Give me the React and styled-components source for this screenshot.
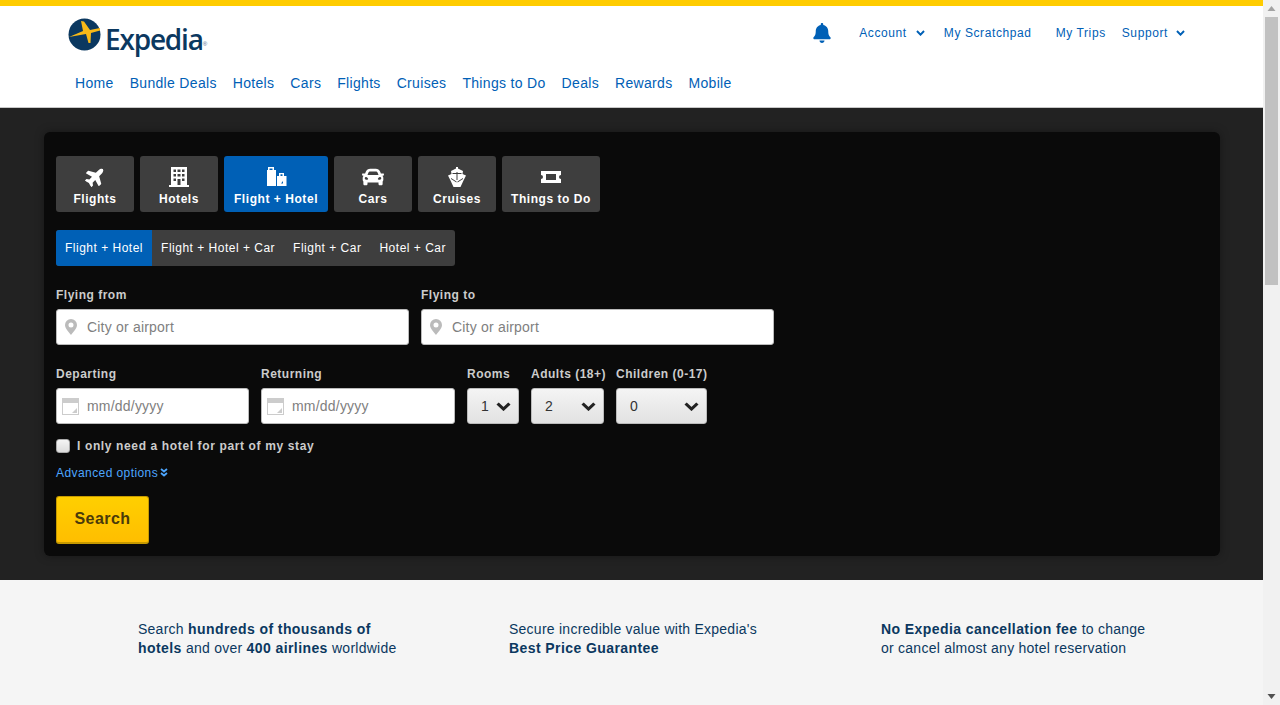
import React from "react";
import styled, { createGlobalStyle } from "styled-components";
import { FaBell, FaPlane, FaCar } from "react-icons/fa";

const Global = createGlobalStyle`
  html, body { margin: 0; padding: 0; height: 100%; overflow: hidden; }
  body { font-family: "Liberation Sans", Arial, sans-serif; }
  * { box-sizing: border-box; }
`;

const Shell = styled.div`
  display: flex;
  height: 100vh;
`;
const Page = styled.main`
  flex: 1;
  min-width: 0;
  overflow: hidden;
  background: #f5f5f5;
`;
const ScrollBar = styled.div`
  display: flex;
  flex-direction: column;
  width: 17px;
  flex: none;
  background: #f1f1f1;
`;
const ScrollArrow = styled.svg`
  width: 17px;
  height: 17px;
  flex: none;
  fill: ${(p) => p.$fill};
`;
const ScrollTrack = styled.div`
  flex: 1;
  padding: 0 2px;
`;
const ScrollThumb = styled.div`
  height: 268px;
  background: #c1c1c1;
`;

const Header = styled.header`
  height: 108px;
  background: #fff;
  border-top: 6px solid #ffcc00;
  border-bottom: 1px solid #c8c8c8;
  padding: 12px 78px 0 68px;
`;
const TopRow = styled.div`
  display: flex;
  justify-content: space-between;
  align-items: flex-start;
  height: 52px;
`;
const Logo = styled.a`
  display: flex;
  align-items: flex-start;
  color: #0b3860;
`;
const LogoMark = styled.svg`
  width: 33px;
  height: 33px;
  flex: none;
`;
const LogoWord = styled.span`
  font-family: "Open Sans", sans-serif;
  font-weight: 600;
  font-size: 28px;
  line-height: 38px;
  letter-spacing: -1.2px;
  margin: 2px 0 0 4px;
`;
const LogoReg = styled.sup`
  font-size: 6px;
  line-height: 6px;
  letter-spacing: 0;
  align-self: flex-start;
  margin-top: 23px;
  color: #4a6a88;
`;
const Account = styled.nav`
  display: flex;
  align-items: center;
  height: 30px;
`;
const BellIcon = styled(FaBell)`
  width: 18px;
  height: 20px;
  color: #0060b6;
  margin-right: 28px;
`;
const TopLink = styled.a`
  display: flex;
  align-items: center;
  margin-left: ${(p) => p.$gap || 0}px;
  font-size: 12px;
  letter-spacing: 0.6px;
  color: #0060b6;
`;
const ChevronSvg = styled.svg`
  flex: none;
  fill: none;
  stroke: currentColor;
  stroke-width: 3;
  width: ${(p) => p.$w}px;
  height: ${(p) => p.$h}px;
  margin-left: ${(p) => p.$ml || 0}px;
`;
const Chevron = ({ w, h, ml }) => (
  <ChevronSvg viewBox="0 0 14 9" $w={w} $h={h} $ml={ml} preserveAspectRatio="none">
    <path d="M1.5 1.5 L7 7 L12.5 1.5" />
  </ChevronSvg>
);
const MainNav = styled.nav`
  display: flex;
  gap: 16px;
  padding-left: 7px;
`;
const NavLink = styled.a`
  font-size: 14px;
  line-height: 26px;
  letter-spacing: 0.32px;
  color: #0060b6;
`;

const Band = styled.section`
  background: #222;
  padding: 24px 43px 24px 44px;
`;
const Card = styled.div`
  background: #0a0a0a;
  border-radius: 6px;
  box-shadow: 0 0 10px rgba(0, 0, 0, 0.35);
  padding: 24px 12px 12px;
  height: 424px;
`;
const Tabs = styled.div`
  display: flex;
  gap: 6px;
`;
const Tab = styled.a`
  display: flex;
  flex-direction: column;
  align-items: center;
  width: ${(p) => p.$w}px;
  height: 56px;
  padding-top: 10px;
  border-radius: 3px;
  background: ${(p) => (p.$active ? "#0060b6" : "#3e3e3e")};
  color: #fff;
  font-size: 12px;
  font-weight: bold;
  letter-spacing: 0.55px;
`;
const TabIcon = styled.svg`
  width: 22px;
  height: 22px;
  fill: #fff;
  flex: none;
`;
const TabPlane = styled(FaPlane)`
  width: 21px;
  height: 21px;
  transform: rotate(-45deg);
  flex: none;
  margin-bottom: 1px;
`;
const TabCar = styled(FaCar)`
  width: 22px;
  height: 22px;
  flex: none;
`;
const TabLabel = styled.span`
  line-height: 14px;
  margin-top: 4px;
  white-space: nowrap;
`;
const SubTabs = styled.div`
  display: inline-flex;
  margin-top: 18px;
  height: 36px;
  background: #3e3e3e;
  border-radius: 3px;
  overflow: hidden;
  vertical-align: top;
`;
const SubTab = styled.a`
  padding: 0 9px;
  line-height: 37px;
  font-size: 12px;
  letter-spacing: 0.5px;
  color: #fff;
  background: ${(p) => (p.$active ? "#0060b6" : "transparent")};
  white-space: nowrap;
`;
const Row = styled.div`
  display: flex;
  gap: 12px;
  margin-top: ${(p) => p.$top}px;
`;
const Field = styled.label`
  display: block;
  width: ${(p) => p.$w}px;
  flex: none;
`;
const FieldLabel = styled.div`
  font-size: 12px;
  font-weight: bold;
  letter-spacing: 0.5px;
  line-height: 15px;
  color: #ccc;
  white-space: nowrap;
  margin-bottom: 7px;
  padding-top: 1px;
  height: 15px;
`;
const InputBox = styled.div`
  display: flex;
  align-items: center;
  height: 36px;
  background: #fff;
  border: 1px solid #bbb;
  border-radius: 3px;
  padding-left: ${(p) => p.$pad}px;
`;
const PinIcon = styled.svg`
  width: 12px;
  height: 16px;
  fill: #bbb;
  flex: none;
  margin-right: 10px;
`;
const CalIcon = styled.svg`
  width: 17px;
  height: 17px;
  flex: none;
  margin-right: 8px;
`;
const Input = styled.input`
  flex: 1;
  min-width: 0;
  border: 0;
  outline: 0;
  padding: 0;
  background: transparent;
  font-family: inherit;
  font-size: 14px;
  letter-spacing: 0.2px;
  &::placeholder { color: #808080; opacity: 1; }
`;
const Select = styled.div`
  display: flex;
  align-items: center;
  justify-content: space-between;
  height: 36px;
  padding: 0 7px 0 13px;
  background: linear-gradient(#f4f4f4, #e2e2e2);
  border: 1px solid #bbb;
  border-radius: 3px;
  font-size: 14px;
  color: #333;
`;
const SelectChevronWrap = styled.span`
  display: flex;
  color: #222;
`;
const CheckRow = styled.label`
  display: flex;
  align-items: center;
  margin-top: 14px;
  height: 15px;
  font-size: 12px;
  font-weight: bold;
  letter-spacing: 0.63px;
  color: #ccc;
`;
const Check = styled.span`
  width: 14px;
  height: 14px;
  background: linear-gradient(#f4f4f4, #dcdcdc);
  border: 1px solid #aaa;
  border-radius: 3px;
  margin-right: 7px;
`;
const Advanced = styled.a`
  display: flex;
  align-items: center;
  margin-top: 12px;
  height: 15px;
  font-size: 12px;
  letter-spacing: 0.42px;
  color: #4da6ff;
`;
const AdvIcon = styled.svg`
  width: 8px;
  height: 9px;
  margin-left: 2px;
  fill: none;
  stroke: currentColor;
  stroke-width: 1.8;
`;
const SearchButton = styled.button`
  display: block;
  width: 93px;
  height: 48px;
  margin-top: 16px;
  padding: 0 0 1px;
  border: 1px solid #c79a00;
  border-bottom-width: 2px;
  border-radius: 3px;
  background: linear-gradient(#ffcf00, #ffbe00);
  font-family: inherit;
  font-size: 16px;
  font-weight: bold;
  letter-spacing: 0.45px;
  color: #4a3a0a;
`;
const Benefits = styled.section`
  display: grid;
  grid-template-columns: 371px 372px 1fr;
  padding: 40px 0 0 138px;
  height: 125px;
  align-content: start;
`;
const Benefit = styled.p`
  margin: 0;
  font-size: 14px;
  line-height: 19px;
  letter-spacing: 0.25px;
  color: #0b3860;
  b { font-weight: bold; letter-spacing: 0.42px; }
`;

const Pin = () => (
  <PinIcon viewBox="0 0 12 16"><path fillRule="evenodd" d="M6 0a6 6 0 0 1 6 6c0 3-3.5 7-6 10C3.5 13 0 9 0 6a6 6 0 0 1 6-6zm0 3.5a2.5 2.5 0 1 0 0 5 2.5 2.5 0 0 0 0-5z" /></PinIcon>
);
const Cal = () => (
  <CalIcon viewBox="0 0 17 17">
    <rect width="17" height="17" fill="#ccc" />
    <rect x="1" y="5" width="15" height="11" fill="#fff" />
    <path d="M15 15H10L15 10Z" fill="#ccc" />
  </CalIcon>
);

const tabs = [
  { label: "Flights", w: 78, icon: <TabPlane /> },
  {
    label: "Hotels", w: 78,
    icon: (
      <TabIcon viewBox="0 0 22 22">
        <path fillRule="evenodd" d="M3 1h16v18h2v2H1v-2h2zM5.5 3.5V6h2.5V3.5zm4 0V6H12.5V3.5zm4.5 0V6h2.5V3.5zM5.5 8v2.5h2.5V8zm4 0v2.5h3V8zm4.5 0v2.5h2.5V8zM5.5 12.5V15h2.5v-2.500zm8.500 0V15h2.5v-2.500zM9.500 13v6h3v-6z" />
      </TabIcon>
    ),
  },
  {
    label: "Flight + Hotel", w: 104, active: true,
    icon: (
      <TabIcon viewBox="0 0 22 22">
        <path fillRule="evenodd" d="M3 1h6v3h2v16H2V4h1zm1.500 1.500V4h3V2.500z" />
        <path fillRule="evenodd" d="M14 7h5v3h2.500v10H12V10h2zm1.500 1.200V10h2V8.200zM18 15l-2 2.500h2z" />
      </TabIcon>
    ),
  },
  { label: "Cars", w: 78, icon: <TabCar /> },
  {
    label: "Cruises", w: 78,
    icon: (
      <TabIcon viewBox="0 0 22 22">
        <path d="M10 1h2v1.500l5 2.500-.5 3 3.500 1.500-2.500 5-3 6.500H7.500l-3-6.500-2.500-5L5.500 8 5 5l5-2.500z" />
        <path d="M10.500 6h1v8h-1zM6.500 7h9v1h-9zM5 12l5.500 3.500v1L5 13zM17 12l-5.500 3.500v1L17 13z" fill="#3e3e3e" />
      </TabIcon>
    ),
  },
  {
    label: "Things to Do", w: 98,
    icon: (
      <TabIcon viewBox="0 0 22 22">
        <path fillRule="evenodd" d="M1 5h20v4a2 2 0 0 0 0 4v4H1v-4a2 2 0 0 0 0-4zm5 3v6h10V8z" />
      </TabIcon>
    ),
  },
];

export default function App() {
  return (
    <Shell>
      <Global />
      <Page>
        <Header>
          <TopRow>
            <Logo>
              <LogoMark viewBox="0 0 33 33">
                <circle cx="16.5" cy="16.5" r="16" fill="#0b3860" />
                <path d="M13 3 L16 3.5 L22 12 L32 10 L32 12.5 L23 15 L22.5 25 L20.5 25 L18 16 L1 19 L15 13 Z" fill="#f7b918" />
              </LogoMark>
              <LogoWord>Expedia</LogoWord>
              <LogoReg>®</LogoReg>
            </Logo>
            <Account>
              <BellIcon />
              <TopLink>Account<Chevron w={9} h={6} ml={9} /></TopLink>
              <TopLink $gap={19}>My Scratchpad</TopLink>
              <TopLink $gap={24}>My Trips</TopLink>
              <TopLink $gap={16}>Support<Chevron w={9} h={6} ml={8} /></TopLink>
            </Account>
          </TopRow>
          <MainNav>
            {["Home", "Bundle Deals", "Hotels", "Cars", "Flights", "Cruises", "Things to Do", "Deals", "Rewards", "Mobile"].map((n) => (
              <NavLink key={n}>{n}</NavLink>
            ))}
          </MainNav>
        </Header>
        <Band>
          <Card>
            <Tabs>
              {tabs.map((t) => (
                <Tab key={t.label} $w={t.w} $active={t.active}>
                  {t.icon}
                  <TabLabel>{t.label}</TabLabel>
                </Tab>
              ))}
            </Tabs>
            <SubTabs>
              <SubTab $active>Flight + Hotel</SubTab>
              <SubTab>Flight + Hotel + Car</SubTab>
              <SubTab>Flight + Car</SubTab>
              <SubTab>Hotel + Car</SubTab>
            </SubTabs>
            <Row $top={21}>
              <Field $w={353}>
                <FieldLabel>Flying from</FieldLabel>
                <InputBox $pad={8}><Pin /><Input placeholder="City or airport" /></InputBox>
              </Field>
              <Field $w={353}>
                <FieldLabel>Flying to</FieldLabel>
                <InputBox $pad={8}><Pin /><Input placeholder="City or airport" /></InputBox>
              </Field>
            </Row>
            <Row $top={21}>
              <Field $w={193}>
                <FieldLabel>Departing</FieldLabel>
                <InputBox $pad={5}><Cal /><Input placeholder="mm/dd/yyyy" /></InputBox>
              </Field>
              <Field $w={194}>
                <FieldLabel>Returning</FieldLabel>
                <InputBox $pad={5}><Cal /><Input placeholder="mm/dd/yyyy" /></InputBox>
              </Field>
              <Field $w={52}>
                <FieldLabel>Rooms</FieldLabel>
                <Select>1<SelectChevronWrap><Chevron w={15} h={9} /></SelectChevronWrap></Select>
              </Field>
              <Field $w={73}>
                <FieldLabel>Adults (18+)</FieldLabel>
                <Select>2<SelectChevronWrap><Chevron w={15} h={9} /></SelectChevronWrap></Select>
              </Field>
              <Field $w={91}>
                <FieldLabel>Children (0-17)</FieldLabel>
                <Select>0<SelectChevronWrap><Chevron w={15} h={9} /></SelectChevronWrap></Select>
              </Field>
            </Row>
            <CheckRow><Check />I only need a hotel for part of my stay</CheckRow>
            <Advanced>
              Advanced options
              <AdvIcon viewBox="0 0 8 9"><path d="M1 1 L4 3.5 L7 1 M1 5 L4 7.5 L7 5" /></AdvIcon>
            </Advanced>
            <SearchButton>Search</SearchButton>
          </Card>
        </Band>
        <Benefits>
          <Benefit>Search <b>hundreds of thousands of<br />hotels</b> and over <b>400 airlines</b> worldwide</Benefit>
          <Benefit>Secure incredible value with Expedia's<br /><b>Best Price Guarantee</b></Benefit>
          <Benefit><b>No Expedia cancellation fee</b> to change<br />or cancel almost any hotel reservation</Benefit>
        </Benefits>
      </Page>
      <ScrollBar>
        <ScrollArrow $fill="#a3a3a3" viewBox="0 0 17 17"><path d="M8.5 6 L12.5 11 H4.5Z" /></ScrollArrow>
        <ScrollTrack><ScrollThumb /></ScrollTrack>
        <ScrollArrow $fill="#505050" viewBox="0 0 17 17"><path d="M8.5 11 L12.5 6 H4.5Z" /></ScrollArrow>
      </ScrollBar>
    </Shell>
  );
}
